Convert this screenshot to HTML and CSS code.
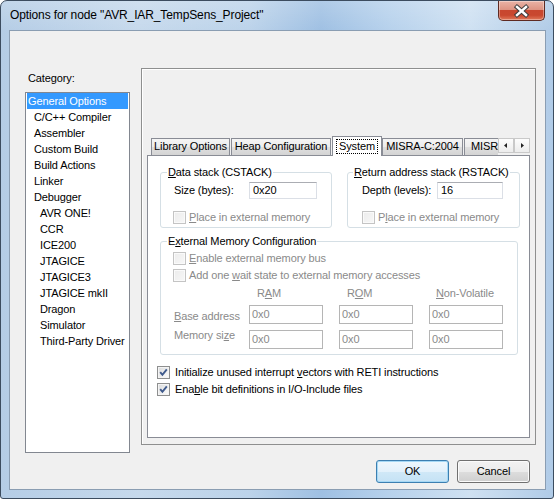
FILE: index.html
```html
<!DOCTYPE html>
<html>
<head>
<meta charset="utf-8">
<link rel="stylesheet" href="styles.css">
</head>
<body>
<div class="window">
  <div class="titlebar">
    <span class="title">Options for node "AVR_IAR_TempSens_Project"</span>
    <div class="close">
      <svg width="45" height="18" viewBox="0 0 45 18">
        <path d="M18 5 L27 13 M27 5 L18 13" stroke="#3d3d3d" stroke-width="4.4" stroke-linecap="square" fill="none"/>
        <path d="M18 5 L27 13 M27 5 L18 13" stroke="#ffffff" stroke-width="2.4" stroke-linecap="square" fill="none"/>
      </svg>
    </div>
  </div>
  <div class="client">
    <div class="main">
      <div class="left">
        <div class="cat-label">Category:</div>
        <ul class="list">
          <li class="l0 sel">General Options</li>
          <li class="l1">C/C++ Compiler</li>
          <li class="l1">Assembler</li>
          <li class="l1">Custom Build</li>
          <li class="l1">Build Actions</li>
          <li class="l1">Linker</li>
          <li class="l1">Debugger</li>
          <li class="l2">AVR ONE!</li>
          <li class="l2">CCR</li>
          <li class="l2">ICE200</li>
          <li class="l2">JTAGICE</li>
          <li class="l2">JTAGICE3</li>
          <li class="l2">JTAGICE mkII</li>
          <li class="l2">Dragon</li>
          <li class="l2">Simulator</li>
          <li class="l2">Third-Party Driver</li>
        </ul>
      </div>
      <div class="panel">
        <div class="strip">
          <div class="tabs">
            <div class="tab t-lib">Library Options</div>
            <div class="tab t-heap">Heap Configuration</div>
            <div class="tab t-sys active"><span class="focus">System</span></div>
            <div class="tab t-misra">MISRA-C:2004</div>
            <div class="tab t-misra2">MISRA-C:1998</div>
          </div>
          <div class="arrows">
            <span class="arr"><svg width="14" height="13" viewBox="0 0 14 13"><path d="M8 4 L5 6.5 L8 9 Z" fill="#222"/></svg></span>
            <span class="arr"><svg width="14" height="13" viewBox="0 0 14 13"><path d="M6 4 L9 6.5 L6 9 Z" fill="#222"/></svg></span>
          </div>
        </div>
        <div class="page">
          <div class="groups">
            <fieldset class="grp g-data">
              <legend><u>D</u>ata stack (CSTACK)</legend>
              <div class="frow"><span class="flabel">Size (bytes):</span><span class="edit w68">0x20</span></div>
              <div class="crow dis"><span class="cb cb-dis"></span><span><u>P</u>lace in external memory</span></div>
            </fieldset>
            <fieldset class="grp g-ret">
              <legend><u>R</u>eturn address stack (RSTACK)</legend>
              <div class="frow"><span class="flabel">Depth (levels):</span><span class="edit w66">16</span></div>
              <div class="crow dis"><span class="cb cb-dis"></span><span>P<u>l</u>ace in external memory</span></div>
            </fieldset>
          </div>
          <fieldset class="grp g-ext">
            <legend>E<u>x</u>ternal Memory Configuration</legend>
            <div class="crow dis first"><span class="cb cb-dis"></span><span><u>E</u>nable external memory bus</span></div>
            <div class="crow dis second"><span class="cb cb-dis"></span><span>Add one <u>w</u>ait state to external memory accesses</span></div>
            <div class="mgrid">
              <span></span>
              <span class="hdr">R<u>A</u>M</span>
              <span class="hdr">R<u>O</u>M</span>
              <span class="hdr nv"><u>N</u>on-Volatile</span>
              <span class="mlabel base"><u>B</u>ase address</span>
              <span class="edit dedit">0x0</span>
              <span class="edit dedit">0x0</span>
              <span class="edit dedit">0x0</span>
              <span class="mlabel size">Memory si<u>z</u>e</span>
              <span class="edit dedit r2">0x0</span>
              <span class="edit dedit r2">0x0</span>
              <span class="edit dedit r2">0x0</span>
            </div>
          </fieldset>
          <div class="crow opt opt1"><span class="cb"><svg width="11" height="11" viewBox="0 0 11 11"><path d="M2.2 5.2 L4.4 7.8 L8.8 2.4" stroke="#3f5a8c" stroke-width="1.9" fill="none"/></svg></span><span>Initialize unused interrupt <u>v</u>ectors with RETI instructions</span></div>
          <div class="crow opt opt2"><span class="cb"><svg width="11" height="11" viewBox="0 0 11 11"><path d="M2.2 5.2 L4.4 7.8 L8.8 2.4" stroke="#3f5a8c" stroke-width="1.9" fill="none"/></svg></span><span>Ena<u>b</u>le bit definitions in I/O-Include files</span></div>
        </div>
      </div>
    </div>
    <div class="buttons">
      <div class="btn default">OK</div>
      <div class="btn">Cancel</div>
    </div>
  </div>
</div>
</body>
</html>
```

FILE: styles.css
```css
* { box-sizing: border-box; }

body {
  margin: 0;
  background: #ffffff;
  font-family: "Liberation Sans", Arial, sans-serif;
  font-size: 11px;
  line-height: 13px;
  letter-spacing: -0.12px;
  color: #000;
}

.window {
  width: 554px;
  height: 499px;
  border: 1px solid #3c4c5f;
  border-radius: 7px 7px 3px 3px;
  padding: 0 7px 8px 8px;
  display: flex;
  flex-direction: column;
  background:
    linear-gradient(180deg, rgba(255,255,255,0.18) 0px, rgba(255,255,255,0) 30px),
    linear-gradient(90deg, #b5cde6 0%, #c6d9ec 25%, #bcd3ea 45%, #9fc0e3 58%, #b6d1ec 70%, #cfe1f2 85%, #b0cbe7 100%);
}

.titlebar {
  height: 29px;
  display: flex;
  justify-content: space-between;
  align-items: flex-start;
}

.title {
  font-size: 12px;
  line-height: 15px;
  margin-top: 7px;
  padding-left: 1px;
  color: #000;
  white-space: nowrap;
}

.close {
  width: 47px;
  height: 20px;
  margin-right: 1px;
  border: 1px solid #5e2a22;
  border-top: none;
  border-radius: 0 0 5px 5px;
  background: linear-gradient(180deg, #e9b3a6 0%, #dd9483 45%, #c8472f 50%, #c9482f 75%, #e0795a 100%);
  box-shadow: inset 0 0 0 1px rgba(255,255,255,0.35);
  display: flex;
  align-items: center;
  justify-content: center;
}

.client {
  height: 460px;
  border: 1px solid #8a9db2;
  background: #f0f0f0;
  display: flex;
  flex-direction: column;
}

.main {
  display: flex;
  padding: 37px 0 0 15px;
}

.left { width: 105px; flex: none; }

.cat-label {
  margin-top: 4px;
  padding-left: 3px;
  line-height: 13px;
}

.list {
  margin: 7px 0 0 0;
  padding: 0 1px;
  list-style: none;
  height: 361px;
  border: 1px solid #828790;
  background: #fff;
}

.list li {
  height: 16px;
  line-height: 16px;
  white-space: nowrap;
}

.l0 { padding-left: 1px; }
.l1 { padding-left: 7px; }
.l2 { padding-left: 13px; }
.list .sel { background: #3399ff; color: #fff; }

.panel {
  margin-left: 11px;
  width: 395px;
  height: 377px;
  border: 1px solid #8e8f8f;
  box-shadow: inset 1px 1px 0 #ffffff;
  padding: 67px 5px 6px 5px;
  display: flex;
  flex-direction: column;
  flex: none;
}

.strip {
  display: flex;
  height: 20px;
}

.tabs {
  display: flex;
  align-items: flex-end;
  width: 351px;
  overflow: hidden;
  padding-left: 4px;
}

.tab {
  flex: none;
  height: 17px;
  margin-bottom: 1px;
  border: 1px solid #898c95;
  border-bottom: none;
  background: linear-gradient(180deg, #f5f5f5 0%, #ececec 50%, #dfdfdf 51%, #d4d4d4 100%);
  text-align: center;
  line-height: 15px;
  white-space: nowrap;
  overflow: hidden;
}

.t-lib { width: 79px; }
.t-heap { width: 100px; margin-left: 1px; }
.t-sys { width: 50px; margin-left: 1px; }
.t-misra { width: 81px; }
.t-misra2 { width: 80px; margin-left: 1px; text-align: left; padding-left: 6px; }

.tab.active {
  height: 20px;
  margin-bottom: 0;
  background: #fff;
  position: relative;
  z-index: 1;
  line-height: 14px;
  padding-top: 2px;
}

.focus {
  outline: 1px dotted #000;
  padding: 0 2px;
  display: inline-block;
  line-height: 13px;
}

.arrows {
  display: flex;
  margin-top: 2px;
  height: 15px;
  flex: none;
}

.arr {
  width: 16px;
  height: 15px;
  border: 1px solid #c9c9c9;
  background: linear-gradient(180deg, #fdfdfd, #ececec);
  display: flex;
  align-items: center;
  justify-content: center;
}

.page {
  margin-top: -1px;
  height: 283px;
  border: 1px solid #898c95;
  background: #fff;
  padding: 10px 0 0 12px;
}

.groups { display: flex; }

.grp {
  margin: 0;
  border: 1px solid #d5dfe5;
  border-radius: 3px;
  padding: 0 0 0 13px;
  min-width: 0;
}

.grp legend {
  padding: 0 1px;
  margin-left: -7px;
  line-height: 13px;
  white-space: nowrap;
}

.g-data { width: 172px; height: 62px; }
.g-ret { width: 173px; height: 62px; margin-left: 15px; padding-left: 14px; }
.g-ret legend { margin-left: -9px; }

.frow {
  display: flex;
  align-items: center;
  margin-top: 3px;
  height: 17px;
}

.flabel { width: 75px; white-space: nowrap; }

.edit {
  display: block;
  height: 17px;
  border: 1px solid #dbdfe6;
  border-top-color: #abadb3;
  background: #fff;
  padding-left: 3px;
  line-height: 15px;
  white-space: nowrap;
}

.w68 { width: 68px; }
.w66 { width: 66px; }

.crow {
  display: flex;
  align-items: center;
  height: 13px;
  gap: 3px;
  white-space: nowrap;
}

.g-data .crow { margin-top: 12px; margin-left: -1px; }
.g-ret .crow { margin-top: 12px; }

.dis { color: #8a8a8a; }

.cb {
  width: 13px;
  height: 13px;
  flex: none;
  border: 1px solid #8e8f8f;
  background: linear-gradient(135deg, #d9dadb 0%, #f4f4f4 70%, #fbfbfb 100%);
  box-shadow: inset 0 0 0 1px #f4f4f4;
  display: flex;
  align-items: center;
  justify-content: center;
}

.cb svg { display: block; }

.cb-dis {
  border-color: #c4c4c4;
  background: linear-gradient(135deg, #ececec 0%, #f7f7f7 100%);
  box-shadow: inset 0 0 0 1px #fafafa;
}

.g-ext { width: 358px; height: 120px; margin-top: 7px; }
.g-ext .crow { margin-left: -1px; }
.g-ext .first { margin-top: 4px; }
.g-ext .second { margin-top: 4px; }

.mgrid {
  display: grid;
  grid-template-columns: 75px 90px 90px 74px;
  row-gap: 5px;
  margin-top: 5px;
  color: #8a8a8a;
}

.hdr { padding-left: 8px; line-height: 13px; }
.hdr.nv { padding-left: 7px; }

.mlabel { white-space: nowrap; align-self: start; }
.mlabel.base { margin-top: 5px; }
.mlabel.size { margin-top: 0px; }

.dedit {
  width: 74px;
  height: 19px;
  line-height: 17px;
  padding-left: 2px;
  border: 1px solid #b5b5b5;
  background: #fff;
  color: #8a8a8a;
}

.dedit.r2 { margin-top: 1px; }

.opt { gap: 5px; margin-left: -3px; }
.opt1 { margin-top: 11px; }
.opt2 { margin-top: 4px; }

.buttons {
  display: flex;
  justify-content: flex-end;
  gap: 8px;
  padding-right: 15px;
  margin-top: 7px;
}

.btn {
  width: 73px;
  height: 23px;
  border: 1px solid #707070;
  border-radius: 3px;
  background: linear-gradient(180deg, #f2f2f2 0%, #ebebeb 50%, #dddddd 51%, #cfcfcf 100%);
  box-shadow: inset 0 0 0 1px #fbfbfb;
  text-align: center;
  line-height: 21px;
}

.btn.default {
  border-color: #3c7fb1;
  background: linear-gradient(180deg, #eef7fd 0%, #e3f1fb 50%, #d0e8f7 51%, #c5e2f5 100%);
  box-shadow: inset 0 0 0 1px #a5d8f5;
}
```
